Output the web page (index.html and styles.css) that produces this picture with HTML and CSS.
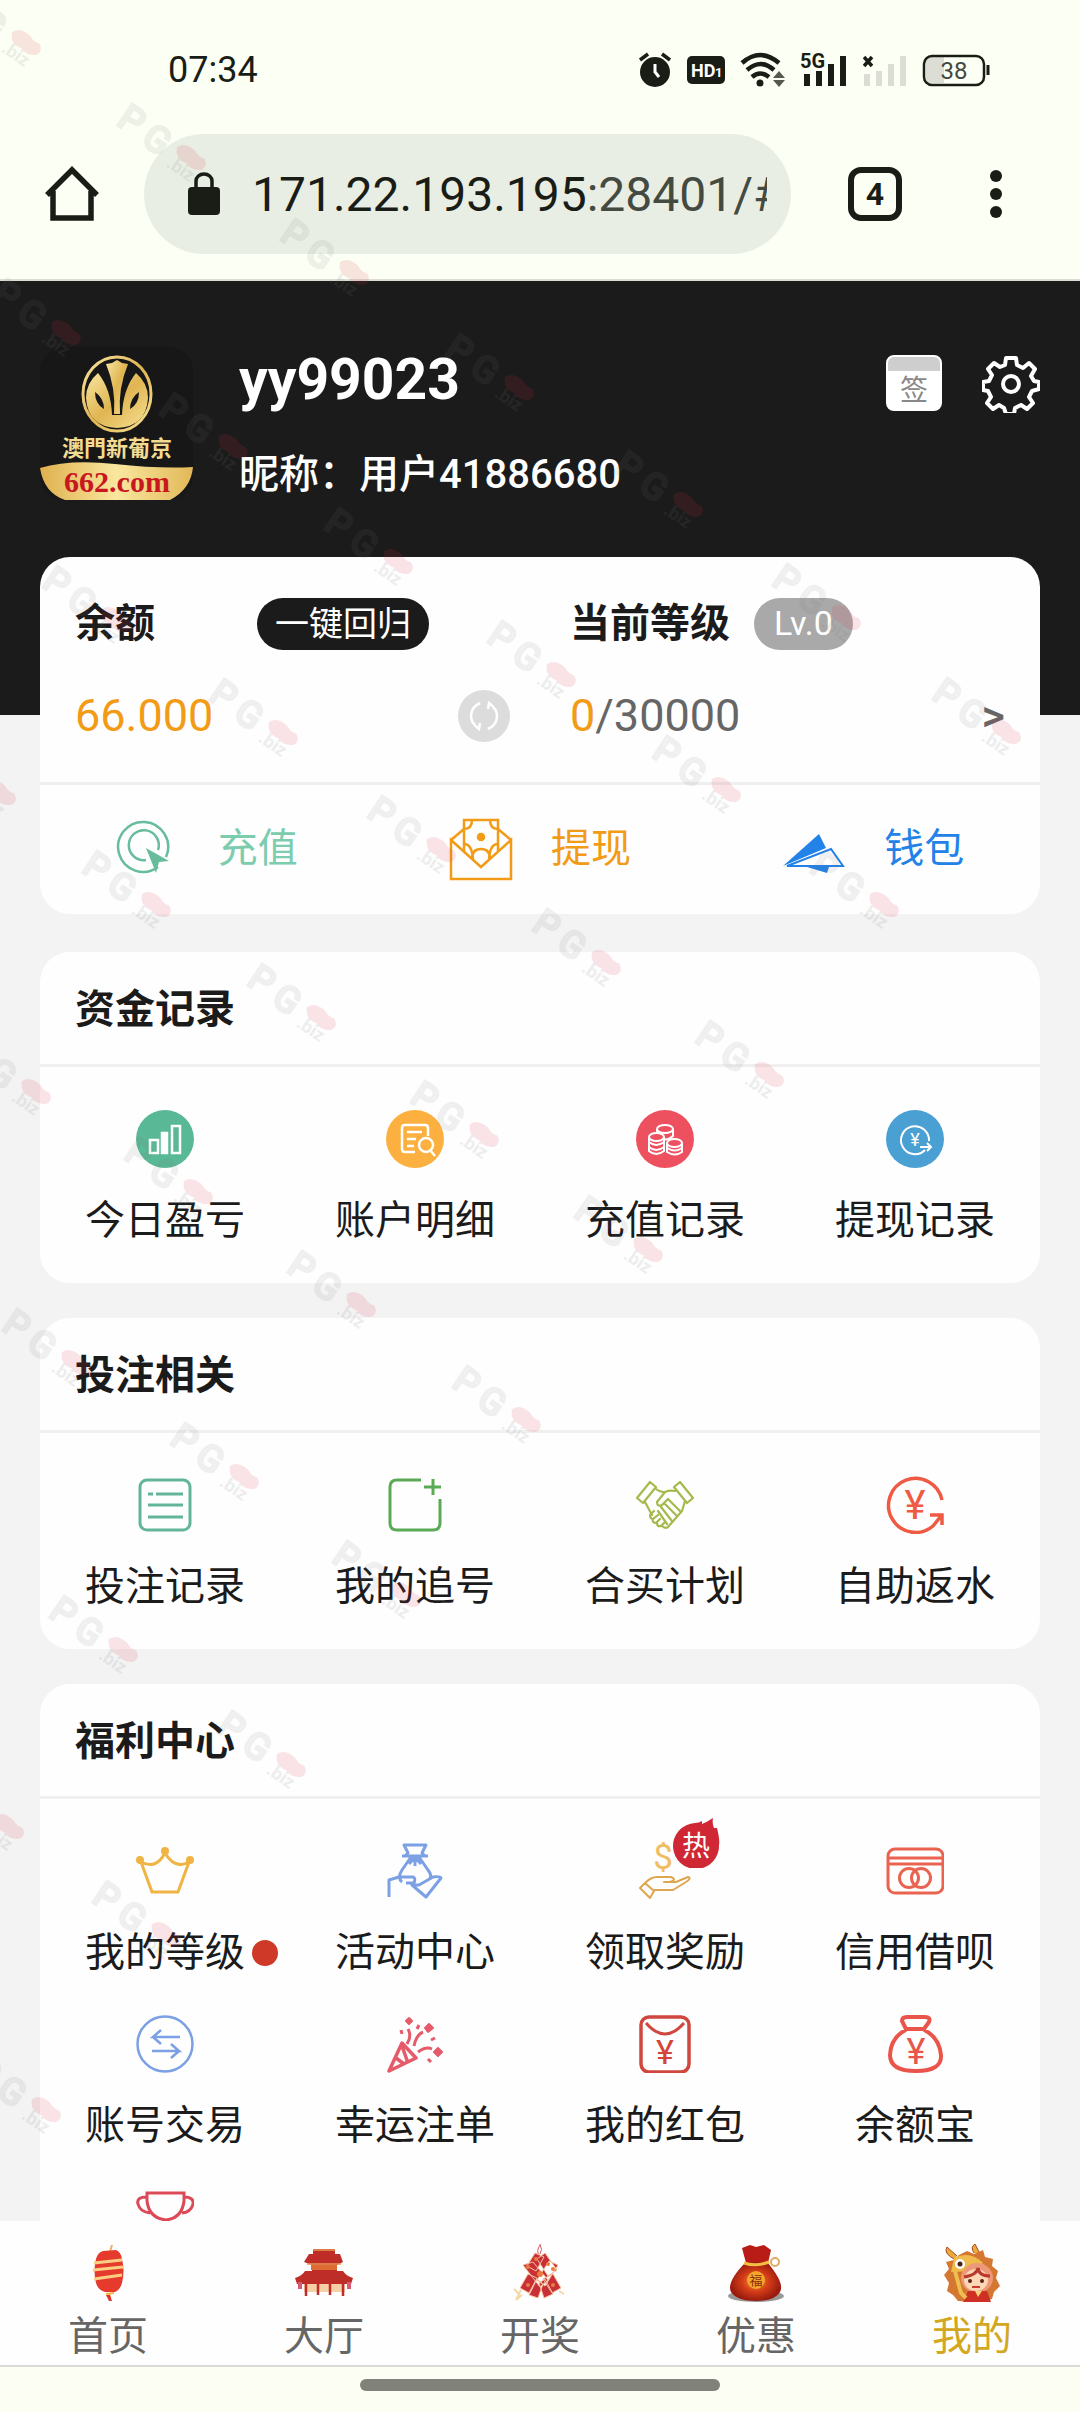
FILE: index.html
```
<!DOCTYPE html>
<html lang="zh-CN">
<head>
    <meta charset="UTF-8">
    <meta name="viewport" content="width=device-width, initial-scale=1.0">
    <title>我的</title>
    <link rel="stylesheet" href="styles.css">
</head>
<body>
    <div class="status-bar">
        <span class="time">07:34</span>
        <div class="status-icons">
            <svg width="34" height="36" viewBox="0 0 34 36"><circle cx="17" cy="20" r="15" fill="#1a1d16"/><path d="M2 8l8-6M32 8l-8-6" stroke="#1a1d16" stroke-width="3.5"/><path d="M17 12v8l4 5" fill="none" stroke="#fff" stroke-width="3"/></svg>
            <svg width="38" height="36" viewBox="0 0 38 36"><rect y="4" width="38" height="28" rx="5" fill="#1a1d16"/><text x="4" y="25" class="hd">HD</text><text x="28" y="25" class="hd-small">1</text></svg>
            <svg width="45" height="36" viewBox="0 0 45 36"><path d="M2 11q18-16 37 0M7 18q14-12 27 0M12 25q8-7 17 0" fill="none" stroke="#1a1d16" stroke-width="4.5"/><circle cx="20" cy="31" r="3.5" fill="#1a1d16"/><path d="M33 26l6-7 6 7zM33 28h12l-6 7z" fill="#555a50"/></svg>
            <svg width="48" height="36" viewBox="0 0 48 36"><path d="M7 34V22M19 34V19M31 34V12M43 34V4" stroke="#1a1d16" stroke-width="6" stroke-linecap="butt"/><text x="0" y="16" class="net">5G</text></svg>
            <svg width="44" height="36" viewBox="0 0 44 36"><path d="M4 34V22M16 34V19M28 34V12M40 34V4" stroke="#dcded5" stroke-width="6"/><path d="M1 5l8 9M9 5l-8 9" stroke="#1a1d16" stroke-width="3.5"/></svg>
            <svg width="68" height="36" viewBox="0 0 68 36"><path d="M4 9q0-5 7-4h11v26H11q-7 1-7-4z" fill="#dcded5"/><rect x="2" y="4" width="60" height="29" rx="8" fill="none" stroke="#1a1d16" stroke-width="2.5"/><path d="M66 13v10" stroke="#1a1d16" stroke-width="3"/><text x="32" y="27" text-anchor="middle" class="battery">38</text></svg>
        </div>
    </div>

    <div class="toolbar">
        <button class="tool" aria-label="主页">
            <svg width="56" height="56" viewBox="0 0 56 56"><path d="M3 29L28 4l25 25M9 25v27h38V25" fill="none" stroke="#1a1d16" stroke-width="5.5"/></svg>
        </button>
        <button class="omnibox">
            <svg width="32" height="44" viewBox="0 0 32 44"><rect y="15" width="32" height="28" rx="4" fill="#1a1d16"/><path d="M8 16V9a8 7 0 0 1 16 0v7" fill="none" stroke="#1a1d16" stroke-width="3.5"/></svg>
            <span class="url">171.22.193.195<span class="port">:28401/#</span></span>
        </button>
        <button class="tool tabs" aria-label="标签页">4</button>
        <button class="tool" aria-label="菜单">
            <svg width="56" height="56" viewBox="0 0 56 56" fill="#1a1d16"><circle cx="28" cy="10" r="6"/><circle cx="28" cy="28" r="6"/><circle cx="28" cy="46" r="6"/></svg>
        </button>
    </div>

    <main>
        <header class="profile">
            <svg class="avatar" width="153" height="153" viewBox="0 0 153 153">
                <defs>
                    <linearGradient id="gold" x1="0" y1="0" x2="1" y2="1"><stop offset="0" stop-color="#f8e6a0"/><stop offset=".5" stop-color="#e0b552"/><stop offset="1" stop-color="#f7e193"/></linearGradient>
                    <linearGradient id="ribbon"><stop offset="0" stop-color="#dfb04e"/><stop offset=".5" stop-color="#f9e79f"/><stop offset="1" stop-color="#e2b858"/></linearGradient>
                </defs>
                <rect width="153" height="153" rx="24" fill="#171717"/>
                <ellipse cx="77" cy="47" rx="34" ry="37" fill="#171717" stroke="url(#gold)" stroke-width="3"/>
                <path d="M77 13l-5 3-6 1q10 24 8 50h6q-2-26 8-50l-6-1z" fill="url(#gold)"/>
                <path d="M58 26q-12 10-12 25 2 29 31 30 29-1 31-30 0-15-12-25-13 16-14 42h-10q-1-26-14-42z" fill="url(#gold)"/>
                <path d="M55 45q9 6 9 17-9-5-9-17zM99 45q-9 6-9 17 9-5 9-17z" fill="#171717"/>
                <text x="77" y="109" text-anchor="middle" class="logo-name">澳門新葡京</text>
                <path d="M0 121q30-9 75-4t78 3q-2 22-23 33H25Q4 146 0 121z" fill="url(#ribbon)"/>
                <text x="77" y="145" text-anchor="middle" class="logo-url">662.com</text>
            </svg>
            <div class="user">
                <div class="username">yy99023</div>
                <div class="nickname">昵称：用户41886680</div>
            </div>
            <a href="#sign" class="sign">签</a>
            <a href="#settings" class="settings" aria-label="设置">
                <svg width="58" height="58" viewBox="0 0 58 58" fill="none" stroke="#fff" stroke-width="4" stroke-linejoin="round"><circle cx="29" cy="29" r="8"/><path d="M24 3h10l1 7 6 3 6-5 6 6-4 7 3 5 5 1v7l-7 2-3 6 4 6-6 6-6-4-6 3-1 6H24l-2-6-5-3-6 4-6-6 4-6-3-6-5-1v-8l6-1 3-6-4-6 6-6 6 4 5-2z"/></svg>
            </a>
        </header>

        <section class="card account">
            <div class="account-info">
                <div class="balance">
                    <div class="line spread">
                        <h2>余额</h2>
                        <button class="pill dark">一键回归</button>
                    </div>
                    <div class="line">
                        <span class="amount orange">66.000</span>
                        <button class="refresh" aria-label="刷新">
                            <svg width="52" height="52" viewBox="0 0 52 52"><circle cx="26" cy="26" r="26" fill="#dcdcdc"/><path d="M22 13q-9 4-9 13 0 7 8 13l1-6M30 39q9-4 9-13 0-7-8-13l-1 6" fill="none" stroke="#fff" stroke-width="2.5"/></svg>
                        </button>
                    </div>
                </div>
                <div class="level">
                    <div class="line">
                        <h2>当前等级</h2>
                        <span class="pill grey">Lv.0</span>
                    </div>
                    <a href="#level" class="line">
                        <span class="amount"><span class="orange">0</span>/30000</span>
                        <span class="more">&gt;</span>
                    </a>
                </div>
            </div>
            <div class="actions">
                <a href="#recharge" class="green">
                    <svg width="64" height="64" viewBox="0 0 64 64" fill="none" stroke="#67bd9b" stroke-width="2.5"><path d="M42 50a25 25 0 1 1 8-10"/><path d="M30 43a15 15 0 1 1 12-10"/><path d="M30 31l23 13-10 1-3 11z" fill="#67bd9b" stroke="none"/></svg>
                    充值
                </a>
                <a href="#withdraw" class="orange">
                    <svg width="64" height="64" viewBox="0 0 64 64" fill="none" stroke="#f29b16" stroke-width="2.5"><path d="M2 23l30 27 30-27v39H2z"/><path d="M2 23l13-11M62 23L49 12M15 34V3h34v31"/><path d="M15 12q8 0 8-9M49 12q-8 0-8-9M15 27q8 0 9 15M49 27q-8 0-9 15M23 42q0-10 9-10t9 10"/><circle cx="32" cy="20" r="3" fill="#f29b16"/></svg>
                    提现
                </a>
                <a href="#wallet" class="blue">
                    <svg width="64" height="64" viewBox="0 0 64 64"><path d="M1 49l36-32 7 14z" fill="#2282e8"/><path d="M5 49l44-17 12 17z" fill="none" stroke="#2282e8" stroke-width="2"/><path d="M25 50l20 6 2-6z" fill="#2282e8"/></svg>
                    钱包
                </a>
            </div>
        </section>

        <section class="card">
            <h2 class="title">资金记录</h2>
            <div class="grid">
                <a href="#today" class="item">
                    <svg viewBox="0 0 58 58"><circle cx="29" cy="29" r="29" fill="#59b896"/><g fill="none" stroke="#fff" stroke-width="2.5"><rect x="14" y="30" width="8" height="13"/><rect x="26" y="23" width="5" height="20" fill="#fff"/><rect x="36" y="16" width="8" height="27"/></g></svg>
                    今日盈亏
                </a>
                <a href="#detail" class="item">
                    <svg viewBox="0 0 58 58"><circle cx="29" cy="29" r="29" fill="#fbb040"/><g fill="none" stroke="#fff" stroke-width="2.5"><path d="M29 42H19q-3 0-3-3V18q0-3 3-3h20q3 0 3 3v8M21 22h15M21 29h9M21 36h7"/><circle cx="40" cy="35" r="7"/><path d="M44 40l5 6"/></g></svg>
                    账户明细
                </a>
                <a href="#recharge-log" class="item">
                    <svg viewBox="0 0 58 58"><circle cx="29" cy="29" r="29" fill="#ed5160"/><g fill="#ed5160" stroke="#fff" stroke-width="2"><path d="M21 19v7q8 7 16 0v-7"/><ellipse cx="29" cy="19" rx="8" ry="4"/><path d="M13 27v14q7 6 15 0V27M13 32q7 6 15 0M13 37q7 6 15 0"/><ellipse cx="20.5" cy="27" rx="7.5" ry="4"/><path d="M31 33v9q8 5 15 0v-9M31 38q8 5 15 0"/><ellipse cx="38.5" cy="33" rx="7.5" ry="4"/></g></svg>
                    充值记录
                </a>
                <a href="#withdraw-log" class="item">
                    <svg viewBox="0 0 58 58"><circle cx="29" cy="29" r="29" fill="#4a9fd3"/><path d="M39 40a14 14 0 1 1 4-9M34 37h11M41 33l4 4-4 4" fill="none" stroke="#fff" stroke-width="2"/><text x="29" y="36" text-anchor="middle" font-size="18" fill="#fff">¥</text></svg>
                    提现记录
                </a>
            </div>
        </section>

        <section class="card">
            <h2 class="title">投注相关</h2>
            <div class="grid">
                <a href="#bets" class="item">
                    <svg viewBox="0 0 58 58" fill="none" stroke="#62b597" stroke-width="3"><rect x="4" y="4" width="50" height="50" rx="7"/><path d="M12 18h5M20 18h27M12 29h35M12 41h35"/></svg>
                    投注记录
                </a>
                <a href="#chase" class="item">
                    <svg viewBox="0 0 58 58" fill="none" stroke="#5aaa55" stroke-width="3"><path d="M35 4H11q-7 0-7 7v36q0 7 7 7h36q7 0 7-7V23M38 11h17M47 3v16"/></svg>
                    我的追号
                </a>
                <a href="#group" class="item">
                    <svg viewBox="0 0 58 58" fill="none" stroke="#a5ba4c" stroke-width="2.2" stroke-linejoin="round" stroke-linecap="round"><path d="M14 6l6 5L7 27l-6-5zM44 6l-6 5 13 16 6-5zM20 13q5 4 9 3 5-2 10-1M9 26l7 13M49 25l-3 10-14 16q-3 2-6-1M29 16l-8 10q0 5 5 3l6-6 13 13M28 27l13 13M25 31l11 14M22 35l9 13"/><path d="M18 35l-4 4q0 4 3 4l5-4M17 43q-1 4 3 4l4-4M21 47q0 4 4 3l3-3"/></svg>
                    合买计划
                </a>
                <a href="#rebate" class="item">
                    <svg viewBox="0 0 58 58" fill="none" stroke="#ee5a43" stroke-width="3.5"><path d="M56 24a27 27 0 1 0-9 26L55 40M44 39h12v10"/><text x="29" y="43" text-anchor="middle" font-size="40" fill="#ee5a43" stroke="none">¥</text></svg>
                    自助返水
                </a>
            </div>
        </section>

        <section class="card">
            <h2 class="title">福利中心</h2>
            <div class="grid">
                <a href="#rank" class="item">
                    <svg viewBox="0 0 58 58"><path d="M5 20l11 30h26l11-30q-14 8-24-9-9 17-24 9z" fill="none" stroke="#f0b444" stroke-width="3"/><g fill="#f0b444"><circle cx="4" cy="18" r="4"/><circle cx="29" cy="9" r="4"/><circle cx="54" cy="18" r="4"/></g></svg>
                    <span class="label">我的等级<i class="dot"></i></span>
                </a>
                <a href="#events" class="item">
                    <svg viewBox="0 0 58 58" fill="none" stroke="#7ba0e4" stroke-width="3" stroke-linejoin="round"><path d="M18 3h22l-4 8 3 3H19l3-3zM16 14h26M25 15l-9 13q-5 8 0 12M33 15l9 13q4 5 2 9M23 22l6-7 6 7M29 15v9"/><path d="M3 55V38l10-3h14q3 1 1 6h-8M26 43h7l14-8q7-1 8 1L40 55z"/></svg>
                    活动中心
                </a>
                <a href="#rewards" class="item">
                    <span class="icon-box">
                        <svg viewBox="0 0 58 58" fill="none" stroke="#dea650" stroke-width="2" stroke-linejoin="round"><text x="27" y="27" text-anchor="middle" font-size="35" fill="#f0bd63" stroke="none">$</text><path d="M4 46l5-5 9 8-4 7zM9 41q6-6 12-6h14q7 3-2 5h-5 12l12-5q4 1-2 5L37 48H18"/></svg>
                        <svg class="hot" viewBox="0 0 48 50"><path d="M23 5q4 0 7-2v3q5-2 11-6-1 6 1 10l3 0q3 12 2 17a23 23 0 1 1-24-22z" fill="#cf2734"/><text x="24" y="38" text-anchor="middle" font-size="28" fill="#fff">热</text></svg>
                    </span>
                    领取奖励
                </a>
                <a href="#credit" class="item">
                    <svg viewBox="0 0 58 58" fill="none" stroke="#e9634f" stroke-width="3"><rect x="2" y="7" width="55" height="44" rx="7"/><path d="M2 16h55M2 22h55"/><circle cx="23" cy="36" r="9.5"/><circle cx="35" cy="36" r="9.5"/></svg>
                    信用借呗
                </a>
                <a href="#transfer" class="item">
                    <svg viewBox="0 0 58 58" fill="none" stroke="#7ba0e4" stroke-width="2.5"><circle cx="29" cy="29" r="27.5"/><path d="M44 22H17l8-7M17 22l8 7M16 36h27l-8-7M43 36l-8 7"/></svg>
                    账号交易
                </a>
                <a href="#lucky" class="item">
                    <svg viewBox="0 0 58 58" fill="none" stroke="#e55b6a" stroke-width="3.5" stroke-linejoin="round"><path d="M3 56l13-28 14 15zM10 43l8 6M16 31l6 17"/><path d="M21 29q5-8 1-15M28 31q2-11 9-14M32 37q8-6 14-3" stroke-width="3"/><path d="M23 3l3 3-3 3-3-3zM43 9l4 4-5 4-3-4zM52 33l4 4-4 4-4-4z" fill="#e55b6a" stroke-width="2"/><path d="M31 14l2-4M45 25l4-2M42 44l3 3M16 19l-1-4" stroke-width="3"/></svg>
                    幸运注单
                </a>
                <a href="#redpacket" class="item">
                    <svg viewBox="0 0 58 58" fill="none" stroke="#cf473e" stroke-width="3.5"><rect x="5" y="2" width="48" height="55" rx="8"/><path d="M10 8q19 22 38 0" stroke-width="3"/><text x="29" y="49" text-anchor="middle" font-size="34" fill="#d44539" stroke="none">¥</text></svg>
                    我的红包
                </a>
                <a href="#yuebao" class="item">
                    <svg viewBox="0 0 58 58" fill="none" stroke="#e9554a" stroke-width="4"><path d="M20 14l-4-8q0-4 5-4h18q6 0 4 5l-5 7zM20 15Q5 22 4 40q0 16 26 16t25-16Q53 22 38 15"/><text x="30" y="49" text-anchor="middle" font-size="36" fill="#e9554a" stroke="none">¥</text></svg>
                    余额宝
                </a>
                <a href="#trophy" class="item" aria-label="奖杯">
                    <svg viewBox="0 0 58 58" fill="none" stroke="#dc4a58" stroke-width="3"><path d="M11 5h37v8q-2 17-18 19Q13 30 11 13zM11 9q-11 0-9 7 2 8 12 9M48 9q10 0 9 7-2 8-11 9M30 33v15M18 50h24"/></svg>
                </a>
            </div>
        </section>
    </main>

    <nav class="tabbar">
        <a href="#home">
            <svg viewBox="0 0 58 58"><path d="M31 8l2-7" stroke="#e5b365" stroke-width="2"/><path d="M24 7l13-1q5 2 6 9 3 12 0 24-2 7-7 9l-10 0q-7-2-9-9-3-12 0-24 2-7 7-8z" fill="#e63a2d"/><path d="M15 19l28-3M14 26l30-3M15 35l28-4" stroke="#f9cf83" stroke-width="3"/><path d="M27 50l8-1M30 49l1 6" stroke="#f0b444" stroke-width="2"/><path d="M27 51h4l2 6h-3z" fill="#dd3530"/></svg>
            首页
        </a>
        <a href="#hall">
            <svg viewBox="0 0 58 58"><path d="M18 5h22v5h5l3 8-6 3v6h6q3 5 10 7l-2 6H2l-2-6q7-2 10-7h7v-6l-8-3 5-8h4z" fill="#be2d28"/><path d="M16 21h26v5H16z" fill="#dc6c34"/><path d="M9 40h41v8H9z" fill="#f5cfa6"/><path d="M11 39v13M23 39v12M35 39v12M48 39v13" stroke="#be2d28" stroke-width="2.5"/><path d="M5 38v7M54 38v7" stroke="#d85a70" stroke-width="4"/><path d="M18 6h22M12 20h34" stroke="#e79752" stroke-width="1.5"/></svg>
            大厅
        </a>
        <a href="#lottery">
            <svg viewBox="0 0 58 58"><path d="M29 1q-4 6-1 10M29 0q3 6 0 10" stroke="#cf5962" fill="none"/><g fill="#c92f36" stroke="#f5c3a0"><path d="M24 9l9 4-8 14-9-5zM34 9l12 17-9 6-11-17zM12 21l10-3 15 18-8 7zM47 21l-9-4-12 19 8 6zM17 30l9 4-8 15-9-5zM42 30l8 14-9 5-9-14zM26 35l-8 16 9 3 5-14zM34 35l8 15-9 4-5-15z"/></g><g fill="#ee7a3f"><circle cx="25" cy="15" r="2"/><circle cx="37" cy="20" r="2"/><circle cx="29" cy="30" r="3"/><circle cx="17" cy="23" r="2"/><circle cx="42" cy="25" r="2"/><circle cx="17" cy="41" r="2"/><circle cx="42" cy="41" r="2"/></g><path d="M3 45l6 6M5 56l6-5M10 46l-5 10M48 47l5 3" stroke="#f3d8a7" stroke-width="2"/></svg>
            开奖
        </a>
        <a href="#promo">
            <svg viewBox="0 0 58 58"><defs><radialGradient id="bag"><stop offset="0" stop-color="#f6a425"/><stop offset=".5" stop-color="#d63e19"/><stop offset="1" stop-color="#9a1b0e"/></radialGradient></defs><ellipse cx="29" cy="52" rx="28" ry="6" fill="#999"/><path d="M15 4l8-3 6 2 8-2 7 5-3 13H19z" fill="#b91c16"/><path d="M19 18h21q18 21 13 30-5 9-24 9T4 48q-5-10 15-30z" fill="url(#bag)"/><path d="M17 19q12 4 25-1" fill="none" stroke="#f3bd43" stroke-width="3"/><circle cx="48" cy="18" r="4" fill="none" stroke="#dfad62" stroke-width="2"/><circle cx="29" cy="36" r="9" fill="#f3a62b"/><text x="29" y="41" text-anchor="middle" font-size="13" fill="#8b2a0c">福</text></svg>
            优惠
        </a>
        <a href="#mine" class="active">
            <svg viewBox="0 0 58 58"><path d="M11 15Q0 9 4 3l10 9M31 9q-4-6 1-9l5 10" fill="#eaaa3b" stroke="#a84c1e"/><path d="M16 11l8-4 7 3 9-4 2 7 8 2-1 7 6 5-2 7 4 8-6 6-2 7-14 3-20-1-5-6-6-4 2-8-5-8 5-6-3-7 8-2z" fill="#d47730"/><path d="M11 14q16-8 29 5l-7 8-25 1z" fill="#f0bb4b"/><ellipse cx="34" cy="34" rx="16" ry="15" fill="#ed9878"/><ellipse cx="33" cy="36" rx="12" ry="11" fill="#fcd6b5"/><path d="M21 33q13-2 14-9 1 8 12 8" fill="none" stroke="#b83a2b" stroke-width="3"/><g fill="#5e2118"><circle cx="27" cy="37" r="2"/><circle cx="39" cy="37" r="2"/></g><circle cx="17" cy="20" r="5" fill="#fff"/><circle cx="17" cy="20" r="2.5" fill="#4a2119"/><path d="M29 43h8" stroke="#c93b2d" stroke-width="2"/><path d="M25 47h19l4 11H20z" fill="#cf3024"/><path d="M12 27l6 22 5 5" stroke="#f0bd50" stroke-width="4" fill="none"/><path d="M32 47l3 6 4-6" fill="#f5d27a"/></svg>
            我的
        </a>
    </nav>
    <div class="gesture-bar"></div>

    <!-- watermark layer -->
    <svg class="watermark" aria-hidden="true">
        <defs>
            <g id="mark">
                <g transform="rotate(34)">
                    <text x="12" y="17" class="mark-text">P</text>
                    <text x="43" y="19" class="mark-text">G</text>
                    <text x="77" y="24" class="mark-biz">.biz</text>
                    <path d="M76 2q4-10 18-7 5 3 11 1 8 4 4 11-8 7-16 3-12 3-17-8z" class="mark-pill"/>
                </g>
            </g>
        </defs>
    </svg>

    <script>
        const marks = [
            [-50, -12], [115, 103], [278, 218], [443, 333], [612, 450], [770, 563], [930, 677],
            [-10, 278], [157, 392], [322, 507], [485, 620], [650, 735], [808, 850],
            [40, 565], [207, 678], [365, 795], [530, 908], [693, 1020],
            [-75, 738], [80, 850], [245, 963], [408, 1080], [572, 1195],
            [-40, 1037], [122, 1137], [285, 1250], [450, 1365],
            [0, 1308], [168, 1422], [330, 1540],
            [47, 1595], [215, 1710], [-67, 1772], [90, 1880], [-30, 2055]
        ];
        const layer = document.querySelector('.watermark');

        marks.forEach(function (mark) {
            const use = document.createElementNS('http://www.w3.org/2000/svg', 'use');
            use.setAttribute('href', '#mark');
            use.setAttribute('x', mark[0]);
            use.setAttribute('y', mark[1]);
            layer.appendChild(use);
        });
    </script>
</body>
</html>
```
FILE: styles.css
```
* {
    box-sizing: border-box;
}

body {
    margin: 0;
    height: 100vh;
    display: flex;
    flex-direction: column;
    overflow: hidden;
    background: #f3f3f3;
    color: #1b1b1b;
    font-family: Roboto, "Noto Sans CJK SC", sans-serif;
    font-size: 40px;
    line-height: 56px;
}

a {
    color: inherit;
    text-decoration: none;
}

button {
    border: none;
    padding: 0;
    background: none;
    color: inherit;
    font-family: inherit;
}

svg {
    display: block;
    flex-shrink: 0;
}

h2 {
    margin: 0;
    font-size: 40px;
    font-weight: 700;
}

/* browser chrome */
.status-bar {
    display: flex;
    justify-content: space-between;
    align-items: center;
    height: 134px;
    padding: 5px 90px 0 168px;
    background: #fcfff4;
    color: #1a1d16;
    flex-shrink: 0;
}

.time {
    font-size: 36px;
}

.status-icons {
    display: flex;
    gap: 15px;
}

.hd {
    font-size: 18px;
    font-weight: 700;
    fill: #fff;
}

.hd-small {
    font-size: 13px;
    font-weight: 700;
    fill: #fff;
}

.net {
    font-size: 20px;
    font-weight: 700;
    fill: #1a1d16;
    stroke: #fcfff4;
    stroke-width: 3px;
    paint-order: stroke;
}

.battery {
    font-size: 24px;
    fill: #44483f;
}

.toolbar {
    display: flex;
    align-items: center;
    height: 147px;
    padding: 0 56px 26px 44px;
    background: #fcfff4;
    border-bottom: 2px solid #dcded5;
    flex-shrink: 0;
}

.tool {
    width: 56px;
    height: 56px;
}

.omnibox {
    display: flex;
    align-items: center;
    flex: 1;
    min-width: 0;
    height: 120px;
    margin: 0 57px 0 44px;
    padding: 0 24px 0 44px;
    border-radius: 60px;
    background: #e9eee4;
    color: #1a1d16;
}

.url {
    margin-left: 32px;
    padding-top: 2px;
    overflow: hidden;
    white-space: nowrap;
    font-size: 48px;
    line-height: 64px;
}

.port {
    color: #454a40;
}

.tabs {
    width: 54px;
    height: 54px;
    margin-right: 66px;
    border: 6px solid #1a1d16;
    border-radius: 13px;
    color: #1a1d16;
    font-size: 32px;
    font-weight: 700;
    line-height: 42px;
}

/* page */
main {
    flex: 1;
    min-height: 0;
    overflow: hidden;
}

.profile {
    display: flex;
    align-items: flex-start;
    height: 434px;
    padding: 66px 40px 0;
    background: #1b1b1b;
    color: #fff;
}

.logo-name {
    font-family: "Noto Sans CJK TC", sans-serif;
    font-size: 22px;
    font-weight: 700;
    fill: #f3dc92;
}

.logo-url {
    font-family: "Liberation Serif", serif;
    font-size: 30px;
    font-weight: 700;
    fill: #c8171e;
}

.user {
    flex: 1;
    margin-left: 46px;
}

.username {
    font-size: 57px;
    font-weight: 700;
    line-height: 66px;
}

.nickname {
    margin-top: 34px;
    font-weight: 500;
}

.sign {
    width: 56px;
    height: 56px;
    margin: 8px 40px 0 0;
    padding-top: 14px;
    border: 2px solid #fff;
    border-radius: 8px;
    background: linear-gradient(#cecece 14px, #fff 14px);
    color: #888;
    font-size: 28px;
    line-height: 40px;
    text-align: center;
}

.settings {
    margin-top: 8px;
}

.card {
    margin: 0 40px 35px;
    border-radius: 30px;
    background: #fefefe;
}

.account {
    position: relative;
    margin-top: -158px;
    margin-bottom: 38px;
}

.account-info {
    display: flex;
    height: 228px;
    padding: 39px 35px 0;
    border-bottom: 3px solid #efefef;
}

.balance {
    width: 435px;
    margin-right: 60px;
}

.level {
    flex: 1;
}

.line {
    display: flex;
    align-items: center;
    height: 56px;
    margin-bottom: 36px;
}

.spread {
    gap: 102px;
}

.pill {
    height: 52px;
    padding: 0 18px;
    border-radius: 26px;
    color: #fff;
    font-size: 34px;
    line-height: 50px;
}

.dark {
    background: #1b1b1b;
}

.grey {
    margin-left: 24px;
    padding: 0 20px;
    background: #a9a9a9;
}

.amount {
    color: #666;
    font-size: 45px;
}

.refresh,
.more {
    margin-left: auto;
}

.more {
    color: #666;
    font-size: 45px;
    font-weight: 500;
}

.orange {
    color: #f29b16;
}

.green {
    color: #7cccae;
}

.blue {
    color: #2282e8;
}

.actions {
    display: flex;
    padding: 32px 0 33px;
}

.actions a {
    display: flex;
    flex: 1;
    justify-content: center;
    align-items: center;
    gap: 38px;
}

.title {
    padding: 30px 35px 26px;
    border-bottom: 3px solid #f0f0f0;
}

.grid {
    display: grid;
    grid-template-columns: repeat(4, 1fr);
    padding-top: 43px;
}

.item {
    display: flex;
    flex-direction: column;
    align-items: center;
    height: 173px;
}

.item svg {
    width: 58px;
    height: 58px;
    margin-bottom: 25px;
}

.icon-box,
.label {
    position: relative;
}

.item .hot {
    position: absolute;
    left: 36px;
    top: -24px;
    width: 48px;
    height: 50px;
}

.dot {
    position: absolute;
    left: 100%;
    top: 15px;
    width: 26px;
    height: 26px;
    margin-left: 7px;
    border-radius: 50%;
    background: #cf3a28;
}

.tabbar {
    display: flex;
    padding-top: 23px;
    background: #fefefe;
    border-bottom: 2px solid #dadad6;
    color: #666;
    flex-shrink: 0;
}

.tabbar a {
    display: flex;
    flex: 1;
    flex-direction: column;
    align-items: center;
}

.tabbar svg {
    width: 58px;
    height: 58px;
    margin-bottom: 7px;
}

.tabbar .active {
    color: #d4a720;
}

.gesture-bar {
    height: 45px;
    padding-top: 12px;
    background: #fcfef3;
    flex-shrink: 0;
}

.gesture-bar::before {
    content: "";
    display: block;
    width: 33.33%;
    height: 12px;
    margin: 0 auto;
    border-radius: 6px;
    background: #80827a;
}

.watermark {
    position: absolute;
    top: 0;
    left: 0;
    width: 100%;
    height: 100%;
    pointer-events: none;
}

.mark-text {
    font-size: 36px;
    fill: none;
    stroke: #777;
    stroke-width: 3px;
    opacity: 0.1;
}

.mark-biz {
    font-size: 18px;
    font-weight: 700;
    fill: #777;
    opacity: 0.12;
}

.mark-pill {
    fill: #d92d45;
    opacity: 0.13;
}
```
